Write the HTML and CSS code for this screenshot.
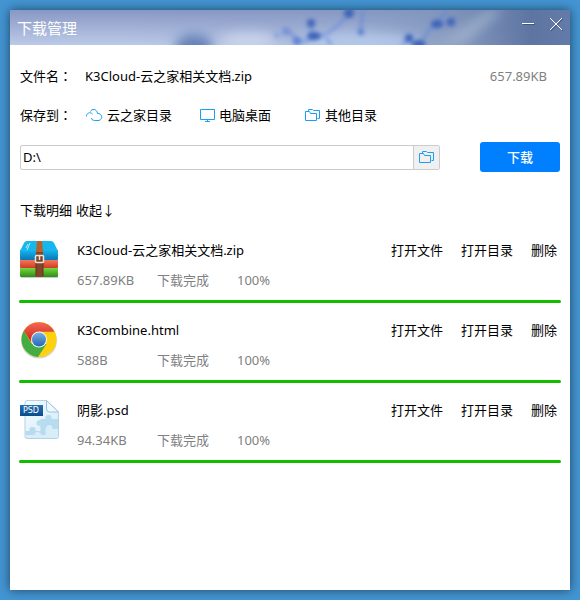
FILE: index.html
```html
<!DOCTYPE html>
<html lang="zh-CN">
<head>
<meta charset="utf-8">
<meta name="viewport" content="width=device-width, initial-scale=1">
<title>下载管理</title>
<link rel="stylesheet" href="styles.css">
</head>
<body>
<svg class="sprite" aria-hidden="true">
  <symbol id="folders" viewBox="0 0 16 14">
    <path d="M.5 12.500V3.500h4l1 2h6v7zM3.500 3.500V1.500h4l1 1h6v8h-2" fill="none" stroke="currentColor"/>
  </symbol>
</svg>
<div class="window">
  <header class="titlebar">
    <svg class="scenery" viewBox="0 0 560 35" preserveAspectRatio="none" aria-hidden="true">
      <defs>
        <linearGradient id="sky" x2="0" y2="1"><stop stop-color="#8998c4"/><stop offset="1" stop-color="#bccae8"/></linearGradient>
        <linearGradient id="dusk" x2="1" y2="0"><stop offset=".2" stop-color="#7894be" stop-opacity="0"/><stop offset=".6" stop-color="#7d96bf" stop-opacity=".25"/><stop offset=".77" stop-color="#7d93b9" stop-opacity=".75"/><stop offset=".93" stop-color="#5e75a2"/><stop offset="1" stop-color="#647ba9"/></linearGradient>
        <filter id="soft" x="-20%" y="-50%" width="140%" height="200%"><feGaussianBlur stdDeviation="2"/></filter>
        <filter id="haze" x="-50%" y="-100%" width="200%" height="300%"><feGaussianBlur stdDeviation="6"/></filter>
      </defs>
      <path fill="url(#sky)" d="M0 0h560v35H0z"/>
      <path fill="url(#dusk)" d="M0 0h560v35H0z"/>
      <g filter="url(#haze)">
        <ellipse cx="184" cy="38" rx="19" ry="14" fill="#6582b8"/>
        <ellipse cx="238" cy="31" rx="28" ry="8" fill="#cad4eb"/>
        <ellipse cx="350" cy="33" rx="60" ry="9" fill="#b3c9ea"/>
        <path d="M426 35 480 0h12l-40 35z" fill="#9caecb"/>
      </g>
      <g filter="url(#soft)" fill="none" stroke="#6385d8" stroke-width="3">
        <path d="M276 21q7 2 11 10h9l8-5 10-1q15-8 25-22M353 0l-3 23M301 13l1 13M316 28l6 7M392 35l7-7 5 6h6l10-15 7-5 9-14M428 14l13-2" opacity=".65"/>
      </g>
      <g filter="url(#soft)" fill="#3e63b8">
        <circle cx="287" cy="31" r="4" fill="#5f83d6"/><ellipse cx="304" cy="26" rx="7" ry="4"/><circle cx="301" cy="13" r="4"/><circle cx="339" cy="3" r="5"/><circle cx="351" cy="22" r="3" fill="#5c7dcd"/><circle cx="399" cy="28" r="4"/><ellipse cx="409" cy="34" rx="7" ry="4"/><ellipse cx="427" cy="14" rx="6" ry="4"/><circle cx="441" cy="12" r="4"/>
        <circle cx="276" cy="21" r="4" fill="#7993d4"/><circle cx="267" cy="25" r="3" fill="#8ca4d9"/>
      </g>
    </svg>
    <h1>下载管理</h1>
    <div class="window-actions">
      <button type="button" aria-label="最小化"><svg width="14" height="14" viewBox="0 0 14 14"><path class="icon-shadow" d="M2 7.500h12"/><path d="M1 6.500h12"/></svg></button>
      <button type="button" aria-label="关闭"><svg width="14" height="14" viewBox="0 0 14 14"><path class="icon-shadow" d="m2 2 12 12M14 2 2 14"/><path d="m1 1 12 12M13 1 1 13"/></svg></button>
    </div>
  </header>
  <main>
    <div class="row">
      <span class="label">文件名<span lang="zh-TW">：</span></span><span>K3Cloud-云之家相关文档.zip</span><span class="total">657.89KB</span>
    </div>
    <div class="row">
      <span class="label">保存到<span lang="zh-TW">：</span></span>
      <div class="places">
        <button class="place" type="button"><svg width="18" height="14" viewBox="0 0 18 14" fill="none" stroke="currentColor"><path d="M1.500 8.500C1 5 5.500 3.500 7.500 6M5.500 3.500C6.500.500 12 .500 12.500 5.500c4.500-.5 6 5.500 1.500 7H9.500Q6.500 12.500 6.500 10"/></svg>云之家目录</button>
        <button class="place" type="button"><svg width="16" height="14" viewBox="0 0 16 14" fill="none" stroke="currentColor"><path d="M1.500 1.500h14v10h-14zM8.500 11.500v2M6 13.500h5"/></svg>电脑桌面</button>
        <button class="place" type="button"><svg width="16" height="14"><use href="#folders"/></svg>其他目录</button>
      </div>
    </div>
    <div class="save-row">
      <div class="path"><input type="text" value="D:\" aria-label="保存路径"><button type="button" aria-label="选择目录"><svg width="16" height="14"><use href="#folders"/></svg></button></div>
      <button class="download" type="button">下载</button>
    </div>
    <div class="details"><h2>下载明细</h2><button type="button">收起↓</button></div>
    <ul class="downloads">
      <li>
        <div class="entry">
          <svg class="file-icon" viewBox="0 0 40 40" aria-hidden="true">
            <defs>
              <linearGradient id="blue" x2="0" y2="1"><stop stop-color="#18b5ef"/><stop offset="1" stop-color="#0877b5"/></linearGradient>
              <linearGradient id="red" x2="0" y2="1"><stop stop-color="#f4765b"/><stop offset="1" stop-color="#cf3d23"/></linearGradient>
              <linearGradient id="green" x2="0" y2="1"><stop stop-color="#74d641"/><stop offset="1" stop-color="#2e8d16"/></linearGradient>
            </defs>
            <path d="M2 37h37v1H2z" fill="#c9c9c9"/>
            <g transform="translate(1 1)">
              <path d="M0 27h38v8q0 1-1 1H1q-1 0-1-1z" fill="url(#green)"/>
              <path d="M0 19h38v7q0 1-1 1H1q-1 0-1-1z" fill="url(#red)"/>
              <path d="M0 9h38v9q0 1-1 1H1q-1 0-1-1z" fill="url(#blue)"/>
              <path d="M7 0h24q2 0 3 2l4 8H0l4-8q1-2 3-2z" fill="#17b7ee"/>
              <path d="m10 2-3 7M8 3 6 7" stroke="#b1ecff" fill="none"/>
              <path d="M17 0h5l1 11h-7z" fill="#b66327"/><path d="M16 11h7v25h-7z" fill="#84452b"/>
              <path d="M16 18v17M23 18v17" stroke="#65301f"/>
              <rect x="15.500" y="14.500" width="8" height="7" rx="1" fill="#80412a" stroke="#ece8dc" stroke-width="1.500"/>
              <path d="M19.500 14v5" stroke="#eee5d7" stroke-width="1.500"/>
            </g>
          </svg>
          <div class="info"><h3>K3Cloud-云之家相关文档.zip</h3><p><span>657.89KB</span><span>下载完成</span><span>100%</span></p></div>
          <nav><a href="#">打开文件</a><a href="#">打开目录</a><a href="#">删除</a></nav>
        </div>
        <progress max="100" value="100" aria-label="下载进度">100%</progress>
      </li>
      <li>
        <div class="entry">
          <svg class="file-icon" viewBox="0 0 40 40" aria-hidden="true">
            <defs>
              <linearGradient id="lens" x2="0" y2="1"><stop stop-color="#78afe5"/><stop offset="1" stop-color="#2467b4"/></linearGradient>
              <linearGradient id="chromered" x2="0" y2="1"><stop stop-color="#f26a55"/><stop offset="1" stop-color="#ce201c"/></linearGradient>
            </defs>
            <g transform="translate(1 0)">
              <circle cx="19" cy="20.500" r="18" fill="#d4d4cf"/>
              <circle cx="19" cy="19.500" r="17.500" fill="#fdd10b"/>
              <path d="M3.800 10.800A17.500 17.500 0 0 0 18 37l8.500-13-15-.5z" fill="#43ac45"/>
              <path d="M3.800 10.800a17.500 17.500 0 0 1 30.700.9H19l-8 10z" fill="url(#chromered)"/>
              <circle cx="19" cy="19.500" r="8" fill="#f4f4f1"/><circle cx="19" cy="19.500" r="7" fill="url(#lens)"/>
            </g>
          </svg>
          <div class="info"><h3>K3Combine.html</h3><p><span>588B</span><span>下载完成</span><span>100%</span></p></div>
          <nav><a href="#">打开文件</a><a href="#">打开目录</a><a href="#">删除</a></nav>
        </div>
        <progress max="100" value="100" aria-label="下载进度">100%</progress>
      </li>
      <li>
        <div class="entry">
          <svg class="file-icon" viewBox="0 0 40 40" aria-hidden="true">
            <defs>
              <linearGradient id="paper" x2="1" y2="1"><stop stop-color="#f5fbff"/><stop offset="1" stop-color="#d2eaf7"/></linearGradient>
              <linearGradient id="badge" x2="0" y2="1"><stop stop-color="#2370b1"/><stop offset="1" stop-color="#0a4c8a"/></linearGradient>
            </defs>
            <path d="M8 .5h19.500L39.500 12v24.500q0 2-2 2H8q-2 0-2-2V2.500q0-2 2-2z" fill="url(#paper)" stroke="#b3d2e6"/>
            <path d="M6.500 31h4q-1-4 3-4t3 4h5v-5q-4 0-4-3t4-3v-1h5q-1-4 3-4t3 4h6.500v17q0 2-2 2H8.500q-2 0-2-2z" fill="#b8dbf0"/>
            <path d="M6.500 35h9q0-3 3-3t4 3h4v-6q1-4 4-4t3 4h5.500v8q0 1-1 1h-30q-1.500 0-1.500-2z" fill="#d7edf8"/>
            <path d="M27.500 .5V9q0 3 3 3h9z" fill="#edf8ff" stroke="#9ac3df"/>
            <path d="M1 5h23v11H1z" fill="url(#badge)"/>
            <text x="12" y="13" text-anchor="middle" class="badge-text">PSD</text>
          </svg>
          <div class="info"><h3>阴影.psd</h3><p><span>94.34KB</span><span>下载完成</span><span>100%</span></p></div>
          <nav><a href="#">打开文件</a><a href="#">打开目录</a><a href="#">删除</a></nav>
        </div>
        <progress max="100" value="100" aria-label="下载进度">100%</progress>
      </li>
    </ul>
  </main>
</div>
</body>
</html>
```
FILE: styles.css
```css
* { box-sizing: border-box; }
body {
  margin: 0;
  padding: 10px;
  background: #4395d3;
  color: #000;
  font: 13px/20px "Noto Sans", "Noto Sans CJK SC", sans-serif;
}
h1, h2, h3, p, ul { margin: 0; padding: 0; font-size: inherit; font-weight: 400; }
button, input { font: inherit; color: inherit; }
button { padding: 0; border: 0; background: none; cursor: pointer; }
a { color: inherit; text-decoration: none; }
svg { display: block; flex: none; }
.sprite { display: none; }
.window {
  min-height: calc(100vh - 20px);
  background: #fff;
  box-shadow: 0 0 10px rgba(0, 0, 0, .55);
}
.titlebar {
  position: relative;
  display: flex;
  justify-content: space-between;
  height: 35px;
  padding: 7px 7px 0;
  color: #fff;
}
.scenery { position: absolute; inset: 0; width: 100%; height: 100%; }
h1 { position: relative; font-size: 15px; line-height: 22px; }
.window-actions { position: relative; display: flex; gap: 14px; height: 14px; }
.window-actions svg { fill: none; stroke: #fff; stroke-width: 1; }
.window-actions .icon-shadow { stroke: #41577d; }
main { padding: 11px 10px 20px; }
.row { display: flex; align-items: center; height: 39px; }
.label { width: 65px; }
.label span { font-family: "Noto Sans CJK TC", sans-serif; line-height: 1; }
.total { margin-left: auto; padding-right: 13px; color: #808080; }
.places { display: flex; gap: 27px; }
.place { display: flex; align-items: center; gap: 4px; }
.place + .place + .place { margin-left: 7px; }
.place svg, .path svg { color: #1b9ff0; }
.save-row { display: flex; align-items: center; gap: 40px; margin-top: 8px; }
.path { display: flex; flex: 1; height: 25px; border: 1px solid #ccc; border-radius: 2px; }
.path input { flex: 1; min-width: 0; padding: 0 2px; border: 0; outline: 0; background: none; }
.path button { display: grid; place-items: center; width: 26px; border-left: 1px solid #ccc; background: #f0f0f0; }
.download { width: 80px; height: 30px; border-radius: 3px; background: #0080ff; color: #fff; font-weight: 500; }
.details { display: flex; gap: 4px; margin-top: 28px; }
.downloads { display: grid; gap: 17px; margin: 20px -1px 0; list-style: none; }
.entry { display: flex; height: 60px; }
.file-icon { width: 40px; height: 40px; margin-right: 18px; }
.info { flex: 1; }
.info p { display: flex; margin-top: 10px; color: #808080; }
.info span { width: 80px; }
nav { display: flex; gap: 18px; padding-right: 4px; }
progress {
  display: block;
  width: 100%;
  height: 3px;
  border: 0;
  border-radius: 2px;
  overflow: hidden;
  appearance: none;
  background: #ddd;
}
progress::-webkit-progress-bar { background: #ddd; }
progress::-webkit-progress-value { background: #12bd00; }
progress::-moz-progress-bar { background: #12bd00; }
.badge-text { fill: #fff; font: 8px "DejaVu Sans", sans-serif; }
```
